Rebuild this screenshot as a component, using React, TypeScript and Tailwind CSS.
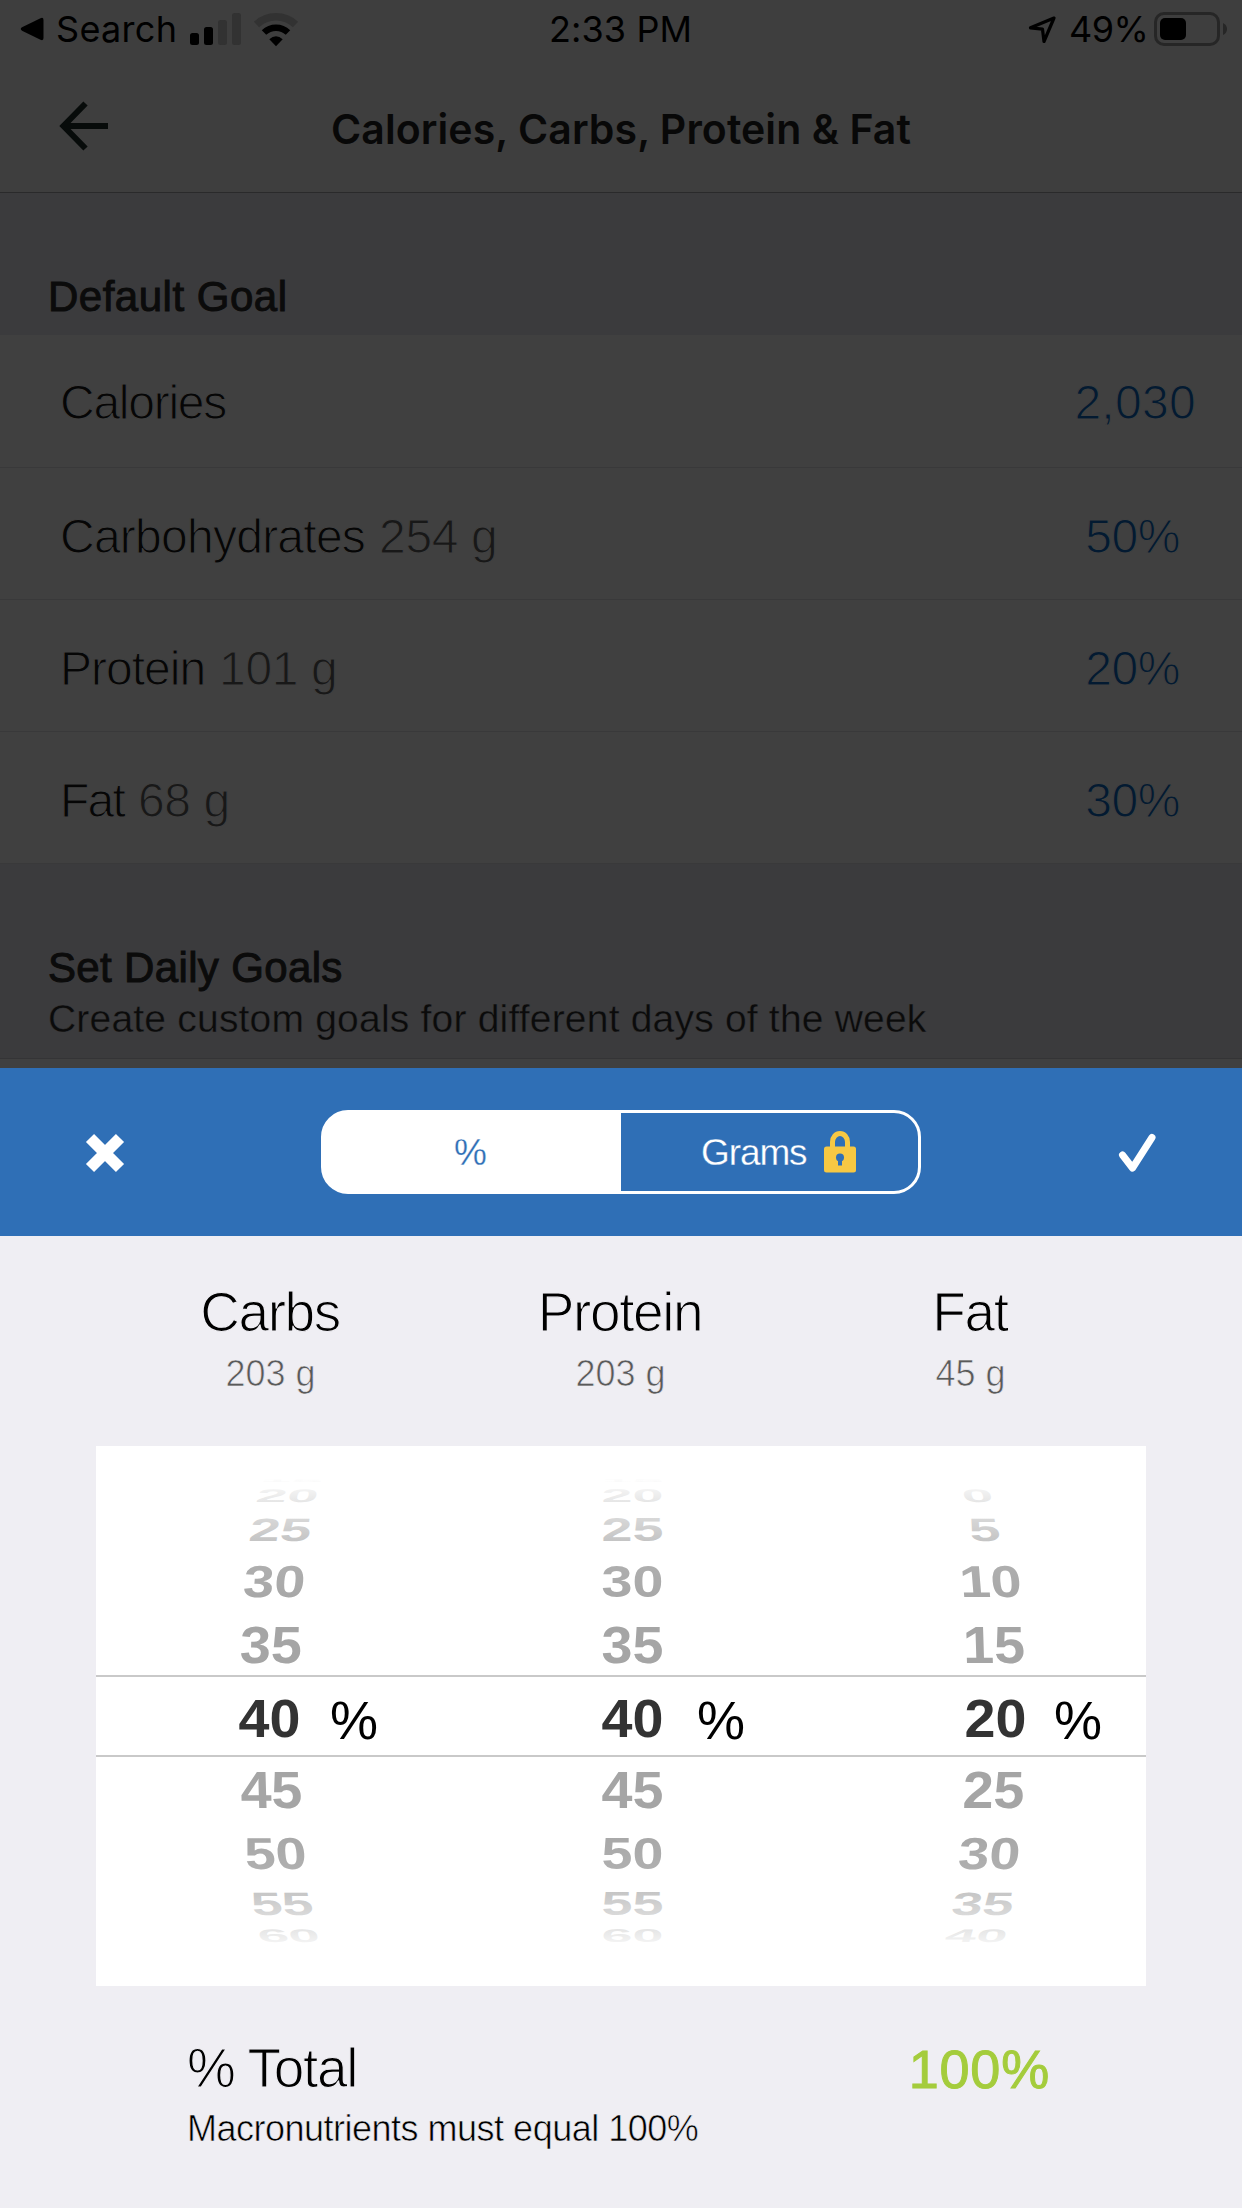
const goalRows = [
  { label: "Calories", grams: "", labelClass: "tracking-[-1.25px]", value: "2,030", valueClass: "mr-[46px] tracking-[0.3px]", pad: "h-[133px] pt-[3px]" },
  { label: "Carbohydrates", grams: "254 g", labelClass: "tracking-[-0.75px]", value: "50%", valueClass: "mr-[62px] tracking-[-0.4px]", pad: "h-[132px] pt-[6px]" },
  { label: "Protein", grams: "101 g", labelClass: "tracking-[-1px]", value: "20%", valueClass: "mr-[62px] tracking-[-0.4px]", pad: "h-[132px] pt-[6px]" },
  { label: "Fat", grams: "68 g", labelClass: "tracking-[-1.8px]", value: "30%", valueClass: "mr-[62px] tracking-[-0.4px]", pad: "h-[132px] pt-[6px]" },
];

const macros = [
  { name: "Carbs", grams: "203 g" },
  { name: "Protein", grams: "203 g" },
  { name: "Fat", grams: "45 g" },
];

// One entry per wheel row, top to bottom: row height, vertical squash, shift towards the centre, lean.
const wheelRows = [
  { height: 7, scaleY: 0.07, shift: 22, lean: 0.4 },
  { height: 22.6, scaleY: 0.34, shift: 18, lean: 0.28 },
  { height: 45.4, scaleY: 0.6, shift: 11, lean: 0.16 },
  { height: 57.4, scaleY: 0.83, shift: 5, lean: 0.08 },
  { height: 72.4, scaleY: 0.97, shift: 1.5, lean: 0.03 },
  { height: 72, scaleY: 1, shift: 0, lean: 0 },
  { height: 71.2, scaleY: 0.97, shift: 1.8, lean: -0.03 },
  { height: 56, scaleY: 0.83, shift: 6, lean: -0.08 },
  { height: 45, scaleY: 0.6, shift: 12.5, lean: -0.16 },
  { height: 19.4, scaleY: 0.34, shift: 19, lean: -0.28 },
];

const wheels = [
  { values: ["15", "20", "25", "30", "35", "40", "45", "50", "55", "60"], side: 1, place: "left-[143px]", percent: "left-[234px]" },
  { values: ["15", "20", "25", "30", "35", "40", "45", "50", "55", "60"], side: 0, place: "left-[506px]", percent: "left-[601px]" },
  { values: ["", "0", "5", "10", "15", "20", "25", "30", "35", "40"], side: -1, place: "left-[869px]", percent: "left-[958px]" },
];

function StatusBar() {
  return (
    <div className="relative flex h-[58px] items-center font-['Inter',sans-serif] text-[36px] leading-[58px] text-black">
      <svg className="ml-[20px] h-[24px] w-[24px]" viewBox="0 0 24 24">
        <path d="M2 10.3 20.5 1.2Q23.5 0 23.5 3v18q0 3-3 1.8L2 13.7Q-0.5 12 2 10.3Z" />
      </svg>
      <span className="ml-[12px] tracking-[0.3px]">Search</span>
      <svg className="absolute left-[190px] top-[13px]" width="52" height="32" viewBox="0 0 52 32">
        <rect x="0" y="20" width="9" height="12" rx="2.5" />
        <rect x="14" y="14" width="9" height="18" rx="2.5" />
        <rect x="28" y="7" width="9" height="25" rx="2.5" fill="#323232" />
        <rect x="42" y="0" width="9" height="32" rx="2.5" fill="#323232" />
      </svg>
      <svg className="absolute left-[253px] top-[12px]" width="46" height="35" viewBox="0 0 46 35">
        <path d="M3.5 12.5A28.5 28.5 0 0 1 42.5 12.5" fill="none" stroke="#323232" strokeWidth="7.5" />
        <path d="M11 20.5A17.5 17.5 0 0 1 35 20.5" fill="none" stroke="#000" strokeWidth="6.5" />
        <path d="M16.3 27.2Q23 21.5 29.7 27.2L23 34.2Z" />
      </svg>
      <span className="absolute left-[549px] tracking-[0.1px]">2:33 PM</span>
      <svg className="absolute left-[1027px] top-[14px]" width="32" height="31" viewBox="0 0 32 31">
        <path d="M27 4 3.5 13.8 15.5 15.2 17 27.5Z" fill="none" stroke="#000" strokeWidth="3.2" strokeLinejoin="round" />
      </svg>
      <span className="absolute left-[1069px] tracking-[-0.6px]">49%</span>
      <svg className="absolute left-[1154px] top-[12px]" width="75" height="34" viewBox="0 0 75 34">
        <rect x="1.5" y="1.5" width="63" height="31" rx="8.5" fill="none" stroke="#262626" strokeWidth="3" />
        <rect x="6" y="6" width="26" height="22" rx="5" />
        <path d="M69 11q4 2 4 6t-4 6Z" fill="#262626" />
      </svg>
    </div>
  );
}

function Header() {
  return (
    <header className="h-[193px] border-b border-[#2a2a2b] bg-[#3e3e3e]">
      <StatusBar />
      <div className="grid h-[134px] grid-cols-[321px_1fr_321px] items-center">
        <svg className="ml-[59px] mt-[2px]" width="50" height="50" viewBox="0 0 50 50">
          <path d="M49 25H6M26.5 2.5 4.5 25 26.5 47.5" fill="none" stroke="#070b0a" strokeWidth="6" />
        </svg>
        <h1 className="whitespace-nowrap pt-[8px] text-center font-['Inter',sans-serif] text-[41px] font-semibold leading-[60px] tracking-[0.08px] text-[#080808]">
          Calories, Carbs, Protein &amp; Fat
        </h1>
      </div>
    </header>
  );
}

function GoalList() {
  return (
    <div className="bg-[#404040] text-[48px] leading-[60px] [-webkit-text-stroke:1.1px_#404040]">
      {goalRows.map((row) => (
        <div
          key={row.label}
          className={`flex items-center justify-between border-b border-[#39393a] pl-[60px] ${row.pad}`}
        >
          <div className="flex gap-[14px]">
            <span className={`text-[#060606] ${row.labelClass}`}>{row.label}</span>
            <span className="tracking-[-0.4px] text-[#181818]">{row.grams}</span>
          </div>
          <span className={`text-[#031a31] ${row.valueClass}`}>{row.value}</span>
        </div>
      ))}
    </div>
  );
}

function PickerBar() {
  return (
    <div className="flex h-[168px] items-center bg-[#2f6fb6]">
      <svg className="ml-[85px] mt-[2px]" width="40" height="40" viewBox="0 0 40 40">
        <path d="M5 5 35 35M35 5 5 35" stroke="#fff" strokeWidth="11.5" />
      </svg>
      <div className="ml-[196px] flex h-[84px] w-[600px] overflow-hidden rounded-[27px] border-[3px] border-white bg-[linear-gradient(to_right,#fff_50%,#2f6fb6_50%)] text-[37px] leading-[78px]">
        <div className="w-[297px] pr-[4px] pt-[1px] text-center text-[#2f6fb6] [-webkit-text-stroke:0.3px_#fff]">%</div>
        <div className="flex flex-1 items-center pl-[80px] text-white">
          <span className="pt-[2px] tracking-[-1.1px] [-webkit-text-stroke:0.3px_#2f6fb6]">Grams</span>
          <svg className="ml-[17px]" width="32" height="42" viewBox="0 0 32 42">
            <path d="M8.5 17V11a7.5 8.5 0 0 1 15 0v6" fill="none" stroke="#f7c843" strokeWidth="5" />
            <rect y="15.5" width="32" height="26" rx="2.5" fill="#f7c843" />
            <circle cx="16" cy="26.5" r="4" fill="#2f6fb6" />
            <path d="M14 27h4v7.500h-4Z" fill="#2f6fb6" />
          </svg>
        </div>
      </div>
      <svg className="ml-[197px] mt-[2px]" width="40" height="40" viewBox="0 0 40 40">
        <path d="M4.5 22 14.5 35 34 4.5" fill="none" stroke="#fff" strokeWidth="7" strokeLinecap="round" strokeLinejoin="round" />
      </svg>
    </div>
  );
}

function MacroWheels() {
  return (
    <div className="relative mx-[96px] mt-[46px] h-[540px] overflow-hidden bg-white">
      <div className="absolute inset-x-0 top-[229px] h-[82px] border-y-2 border-[#c9c9c9]" />
      {wheels.map((wheel, w) => (
        <div key={w}>
          <div className={`absolute top-[31px] flex w-[61px] flex-col ${wheel.place}`}>
            {wheel.values.map((value, i) => {
              const row = wheelRows[i];
              return (
                <div
                  key={i}
                  className={`flex items-center justify-center text-[54px] font-bold leading-none ${
                    i === 5 ? "text-[#333]" : "text-[#a5a5a5]"
                  }`}
                  style={{
                    height: row.height,
                    transform: `matrix(1.03, 0, ${-row.lean * wheel.side * row.scaleY}, ${row.scaleY}, ${row.shift * wheel.side}, 0)`,
                  }}
                >
                  {value}
                </div>
              );
            })}
          </div>
          <span className={`absolute top-[244px] text-[54px] leading-[60px] text-black ${wheel.percent}`}>%</span>
        </div>
      ))}
      <div className="pointer-events-none absolute inset-x-0 top-0 h-[180px] bg-[linear-gradient(to_bottom,#fff_30px,rgb(255_255_255/0.95)_35px,rgb(255_255_255/0.88)_43px,rgb(255_255_255/0.72)_56px,rgb(255_255_255/0.57)_72px,rgb(255_255_255/0.34)_96px,rgb(255_255_255/0.11)_119px,rgb(255_255_255/0.03)_151px,transparent_175px)]" />
      <div className="pointer-events-none absolute inset-x-0 bottom-0 h-[180px] bg-[linear-gradient(to_top,#fff_30px,rgb(255_255_255/0.95)_35px,rgb(255_255_255/0.88)_43px,rgb(255_255_255/0.72)_56px,rgb(255_255_255/0.57)_72px,rgb(255_255_255/0.34)_96px,rgb(255_255_255/0.11)_119px,rgb(255_255_255/0.03)_151px,transparent_175px)]" />
    </div>
  );
}

export default function App() {
  return (
    <main className="flex h-[2208px] w-[1242px] flex-col overflow-hidden bg-[#3b3b3d] font-['Liberation_Sans',Arial,sans-serif]">
      <Header />

      <h2 className="h-[142px] pl-[48px] pt-[79px] text-[42px] leading-[50px] tracking-[0.5px] text-[#0b0b0b] [-webkit-text-stroke:1px_#0b0b0b]">
        Default Goal
      </h2>
      <GoalList />

      <section className="h-[194px] pl-[48px] pt-[79px] text-[#0b0b0b]">
        <h2 className="text-[42px] leading-[50px] tracking-[0.35px] [-webkit-text-stroke:1px_#0b0b0b]">Set Daily Goals</h2>
        <p className="text-[39px] leading-[52px] tracking-[0.2px] [-webkit-text-stroke:0.4px_#3b3b3d]">
          Create custom goals for different days of the week
        </p>
      </section>
      <div className="h-[10px] border-t border-[#343436] bg-[#404040]" />

      <PickerBar />

      <section className="flex-1 bg-[#efeef3]">
        <div className="mx-[96px] grid grid-cols-3 pt-[46px] text-center">
          {macros.map((macro) => (
            <div key={macro.name}>
              <div className="pr-[2px] text-[55px] leading-[60px] tracking-[-1.4px] text-black [-webkit-text-stroke:1.2px_#efeef3]">
                {macro.name}
              </div>
              <div className="mt-[6px] pr-[1px] text-[36px] leading-[52px] text-[#5a5a5a] [-webkit-text-stroke:0.7px_#efeef3]">
                {macro.grams}
              </div>
            </div>
          ))}
        </div>

        <MacroWheels />

        <div className="ml-[187px] mr-[192px] mt-[52px] flex justify-between">
          <div className="text-black">
            <div className="text-[55px] leading-[60px] tracking-[-1.3px] [-webkit-text-stroke:1.2px_#efeef3]">% Total</div>
            <div className="mt-[5px] text-[36px] leading-[52px] tracking-[-0.5px] [-webkit-text-stroke:0.6px_#efeef3]">
              Macronutrients must equal 100%
            </div>
          </div>
          <div className="text-[54px] leading-[62px] tracking-[0.8px] text-[#a4cc3c] [-webkit-text-stroke:1px_#a4cc3c]">100%</div>
        </div>
      </section>
    </main>
  );
}
